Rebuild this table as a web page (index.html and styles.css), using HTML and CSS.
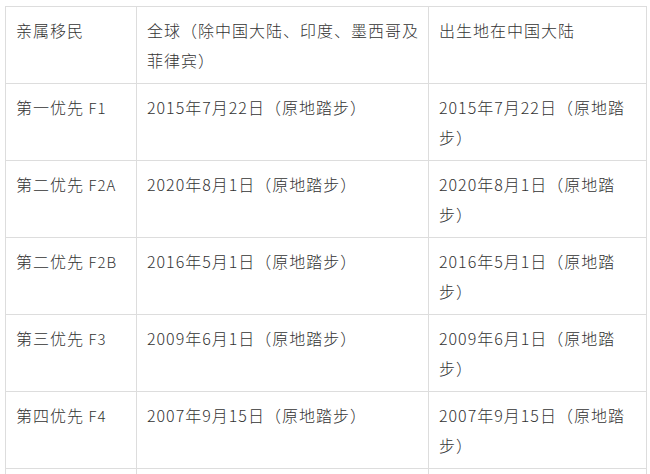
FILE: index.html
```html
<!DOCTYPE html>
<html lang="zh-CN">
<head>
<meta charset="utf-8">
<title>亲属移民排期</title>
<link rel="stylesheet" href="styles.css">
</head>
<body>
<table class="visa-table">
  <colgroup>
    <col class="c1">
    <col class="c2">
    <col class="c3">
  </colgroup>
  <tr>
    <td>亲属移民</td>
    <td>全球（除中国大陆、印度、墨西哥及菲律宾）</td>
    <td>出生地在中国大陆</td>
  </tr>
  <tr>
    <td>第一优先 <span class="code">F1</span></td>
    <td>2015年7月22日（原地踏步）</td>
    <td>2015年7月22日（原地踏步）</td>
  </tr>
  <tr>
    <td>第二优先 <span class="code">F2A</span></td>
    <td>2020年8月1日（原地踏步）</td>
    <td>2020年8月1日（原地踏步）</td>
  </tr>
  <tr>
    <td>第二优先 <span class="code">F2B</span></td>
    <td>2016年5月1日（原地踏步）</td>
    <td>2016年5月1日（原地踏步）</td>
  </tr>
  <tr>
    <td>第三优先 <span class="code">F3</span></td>
    <td>2009年6月1日（原地踏步）</td>
    <td>2009年6月1日（原地踏步）</td>
  </tr>
  <tr>
    <td>第四优先 <span class="code">F4</span></td>
    <td>2007年9月15日（原地踏步）</td>
    <td>2007年9月15日（原地踏步）</td>
  </tr>
  <tr>
    <td>&nbsp;</td>
    <td>&nbsp;</td>
    <td>&nbsp;</td>
  </tr>
</table>
</body>
</html>
```

FILE: styles.css
```css
html, body {
  margin: 0;
  padding: 0;
  background: #ffffff;
}
body {
  padding: 6px 0 0 5px;
  font-family: "Noto Sans CJK SC", "Noto Sans", sans-serif;
  font-size: 16px;
  color: #333333;
}
.visa-table {
  border-collapse: collapse;
  table-layout: fixed;
  width: 641px;
}
.c1 { width: 131px; }
.c2 { width: 292px; }
.c3 { width: 218px; }
.visa-table td {
  border: 1px solid #dddddd;
  padding: 8px 6px 8px 10px;
  line-height: 30px;
  height: 60px;
  vertical-align: top;
  letter-spacing: 1px;
  font-weight: 300;
}
.visa-table td .code {
  font-weight: 300;
  font-size: 15px;
  letter-spacing: 1px;
}
```
